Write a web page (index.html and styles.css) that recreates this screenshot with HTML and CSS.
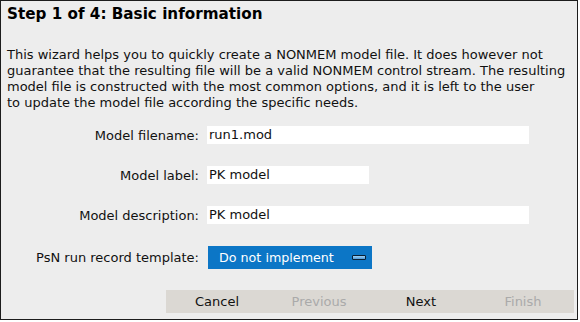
FILE: index.html
```html
<!DOCTYPE html>
<html>
<head>
<meta charset="utf-8">
<link rel="stylesheet" href="styles.css">
</head>
<body>
<div class="wizard">
  <h1 class="title">Step 1 of 4: Basic information</h1>
  <p class="intro">This wizard helps you to quickly create a NONMEM model file. It does however not<br>guarantee that the resulting file will be a valid NONMEM control stream. The resulting<br>model file is constructed with the most common options, and it is left to the user<br>to update the model file according the specific needs.</p>
  <div class="form">
    <label class="label">Model filename:</label>
    <div class="field wide">run1.mod</div>
    <label class="label">Model label:</label>
    <div class="field narrow">PK model</div>
    <label class="label">Model description:</label>
    <div class="field wide">PK model</div>
    <label class="label">PsN run record template:</label>
    <div class="select">
      <span>Do not implement</span>
      <span class="select-icon"></span>
    </div>
  </div>
  <div class="spacer"></div>
  <div class="buttons">
    <div class="btn">Cancel</div>
    <div class="btn disabled">Previous</div>
    <div class="btn">Next</div>
    <div class="btn disabled">Finish</div>
  </div>
</div>
</body>
</html>
```
FILE: styles.css
```css
html, body {
  margin: 0;
  padding: 0;
  background: #ffffff;
}
body {
  font-family: "DejaVu Sans", Verdana, sans-serif;
  color: #111;
}
.wizard {
  box-sizing: border-box;
  width: 578px;
  height: 320px;
  border: 1px solid #1c1c1c;
  background: #ededed;
  display: flex;
  flex-direction: column;
  padding-bottom: 6px;
}
.title {
  margin: 0;
  padding: 3px 0 0 6px;
  font-size: 15.2px;
  font-weight: bold;
  line-height: 20px;
  color: #000;
}
.intro {
  margin: 23px 0 0 6px;
  font-size: 13px;
  line-height: 16px;
  white-space: nowrap;
}
.form {
  margin-top: 15px;
  display: grid;
  grid-template-columns: 198px auto;
  column-gap: 8px;
  row-gap: 22px;
  align-items: center;
  font-size: 13px;
}
.label {
  text-align: right;
}
.field {
  background: #fff;
  height: 18px;
  line-height: 18px;
  padding-left: 2px;
  box-sizing: border-box;
}
.field.wide { width: 322px; }
.field.narrow { width: 162px; }
.select {
  box-sizing: border-box;
  width: 164px;
  height: 23px;
  margin-left: 1px;
  background: #0c76c6;
  color: #fff;
  display: flex;
  align-items: center;
  justify-content: space-between;
  padding: 0 6px 0 11px;
  font-size: 12.7px;
}
.select-icon {
  width: 12px;
  height: 3px;
  border: 1px solid #0a1f33;
  border-radius: 1px;
  background: linear-gradient(#9cd0f5, #4f9ad8);
}
.spacer { flex: 1; }
.buttons {
  align-self: flex-end;
  margin-right: 3px;
  width: 408px;
  height: 23px;
  background: #dbd8d3;
  display: grid;
  grid-template-columns: repeat(4, 1fr);
  font-size: 13px;
}
.btn {
  display: flex;
  align-items: center;
  justify-content: center;
  color: #111;
}
.btn.disabled { color: #aaaaaa; }
```
